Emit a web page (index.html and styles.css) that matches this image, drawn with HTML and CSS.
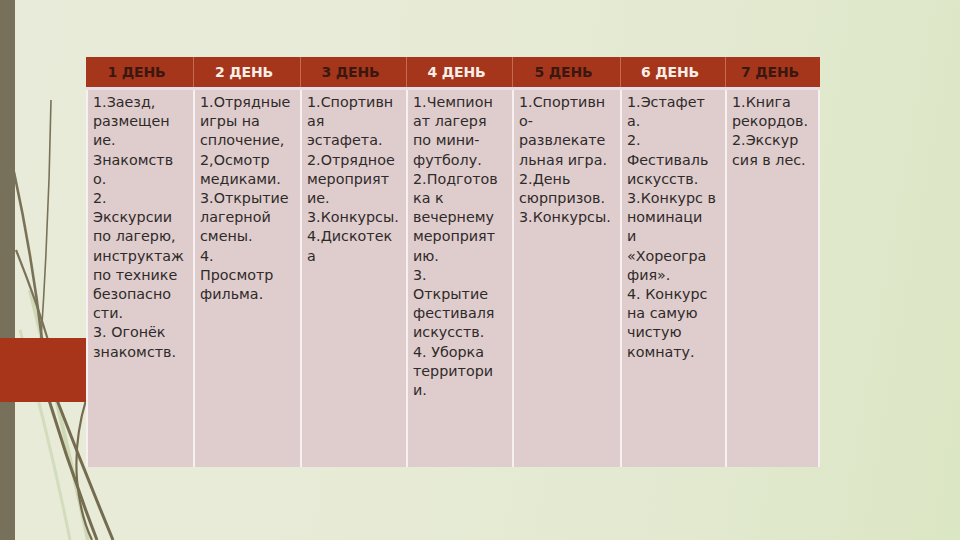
FILE: index.html
```html
<!DOCTYPE html>
<html lang="ru">
<head>
<meta charset="utf-8">
<title>Программа смены</title>
<link rel="stylesheet" href="styles.css">
</head>
<body>
<div class="slide">
  <svg class="decor" width="960" height="540" viewBox="0 0 960 540" aria-hidden="true">
    <path d="M30,290 Q62,420 88,540" fill="none" stroke="#cfd9b8" stroke-width="4"/>
    <path d="M20,330 Q50,440 70,540" fill="none" stroke="#d3dcbc" stroke-width="3"/>
    <path d="M51,100 Q49,220 41,340" fill="none" stroke="#7a7258" stroke-width="1.6"/>
    <path d="M14,172 Q32,255 42,340" fill="none" stroke="#7a7258" stroke-width="2.6"/>
    <path d="M16,250 Q36,300 48,340" fill="none" stroke="#7a7258" stroke-width="2.2"/>
    <path d="M49,400 Q70,470 97,540" fill="none" stroke="#756c50" stroke-width="3"/>
    <path d="M57,400 Q84,470 113,540" fill="none" stroke="#756c50" stroke-width="3"/>
    <path d="M86,400 Q74,440 77,480 Q80,515 92,540" fill="none" stroke="#756c50" stroke-width="2.2"/>
    <rect x="0" y="0" width="15" height="540" fill="#77705a"/>
    <rect x="0" y="338" width="86" height="64" fill="#a8341a"/>
  </svg>

  <div class="schedule">
    <div class="head dark">1 ДЕНЬ</div>
    <div class="head light">2 ДЕНЬ</div>
    <div class="head dark">3 ДЕНЬ</div>
    <div class="head light">4 ДЕНЬ</div>
    <div class="head dark">5 ДЕНЬ</div>
    <div class="head light">6 ДЕНЬ</div>
    <div class="head dark">7 ДЕНЬ</div>

    <div class="sep"></div>

    <div class="cell">1.Заезд,<br>размещен<br>ие.<br>Знакомств<br>о.<br>2.<br>Экскурсии<br>по лагерю,<br>инструктаж<br>по технике<br>безопасно<br>сти.<br>3. Огонёк<br>знакомств.</div>
    <div class="cell">1.Отрядные<br>игры на<br>сплочение,<br>2,Осмотр<br>медиками.<br>3.Открытие<br>лагерной<br>смены.<br>4.<br>Просмотр<br>фильма.</div>
    <div class="cell">1.Спортивн<br>ая<br>эстафета.<br>2.Отрядное<br>мероприят<br>ие.<br>3.Конкурсы.<br>4.Дискотек<br>а</div>
    <div class="cell">1.Чемпион<br>ат лагеря<br>по мини-<br>футболу.<br>2.Подготов<br>ка к<br>вечернему<br>мероприят<br>ию.<br>3.<br>Открытие<br>фестиваля<br>искусств.<br>4. Уборка<br>территори<br>и.</div>
    <div class="cell">1.Спортивн<br>о-<br>развлекате<br>льная игра.<br>2.День<br>сюрпризов.<br>3.Конкурсы.</div>
    <div class="cell">1.Эстафет<br>а.<br>2.<br>Фестиваль<br>искусств.<br>3.Конкурс в<br>номинаци<br>и<br>«Хореогра<br>фия».<br>4. Конкурс<br>на самую<br>чистую<br>комнату.</div>
    <div class="cell">1.Книга<br>рекордов.<br>2.Экскур<br>сия в лес.</div>
  </div>
</div>
</body>
</html>
```

FILE: styles.css
```css
* { box-sizing: border-box; }

html, body {
  margin: 0;
  padding: 0;
}

body {
  width: 960px;
  height: 540px;
  overflow: hidden;
  font-family: "DejaVu Sans", "Noto Sans", sans-serif;
}

.slide {
  position: relative;
  width: 960px;
  height: 540px;
  background: linear-gradient(100deg, #e8ebd9 0%, #e7ebd6 45%, #e2e9cf 75%, #dbe6c4 100%);
  padding: 57px 0 0 86px;
}

.decor {
  position: absolute;
  left: 0;
  top: 0;
}

.schedule {
  position: relative;
  display: grid;
  grid-template-columns: 107px 107px 106px 106px 108px 105px 95px;
  grid-template-rows: 30px 3px 377px;
  width: 734px;
}

.head {
  background: #a5361b;
  display: flex;
  align-items: center;
  justify-content: center;
  padding-right: 6px;
  font-weight: bold;
  font-size: 14px;
  letter-spacing: -0.2px;
  border-left: 1px solid #c46a52;
}

.head:first-child {
  border-left: none;
}

.head.dark {
  color: #3a1810;
}

.head.light {
  color: #fbeee6;
}

.sep {
  grid-column: 1 / -1;
  background: #e6dfea;
}

.cell {
  background: #dfcdcd;
  border-left: 2px solid #f6f1f0;
  padding: 3px 0 0 5px;
  font-size: 14.3px;
  line-height: 19.2px;
  color: #2f2a2a;
  white-space: nowrap;
  overflow: hidden;
}

.cell:last-child {
  border-right: 2px solid #f6f1f0;
}
```
